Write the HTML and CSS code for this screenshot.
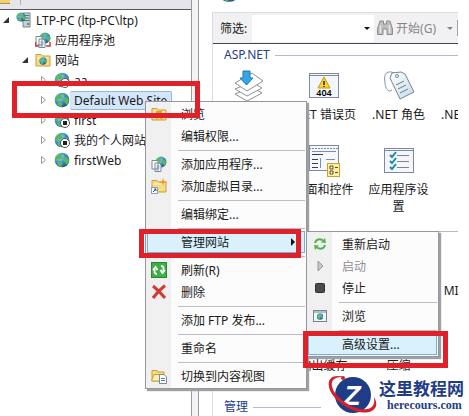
FILE: index.html
```
<!DOCTYPE html>
<html lang="zh-CN">
<head>
    <meta charset="UTF-8">
    <meta name="viewport" content="width=device-width, initial-scale=1.0">
    <title>IIS 管理器</title>
    <link rel="stylesheet" href="styles.css">
</head>
<body>
    <!-- Shared icons -->
    <svg class="defs" width="0" height="0">
        <defs>
            <radialGradient id="sea" cx="0.35" cy="0.3" r="0.8">
                <stop offset="0" stop-color="#b5e6f8"/>
                <stop offset="0.5" stop-color="#3d8fc4"/>
                <stop offset="1" stop-color="#17497d"/>
            </radialGradient>
            <linearGradient id="paper" x1="0" y1="0" x2="1" y2="1">
                <stop offset="0" stop-color="#ffffff"/>
                <stop offset="1" stop-color="#c9d9e4"/>
            </linearGradient>
            <symbol id="globe" viewBox="0 0 16 16">
                <circle cx="8" cy="8" r="7.3" fill="url(#sea)"/>
                <path d="M2 4.500 Q5 1 9 1.500 L7.500 4 L9 6 L6 7.500 L4 7 L1.500 9 Q0.800 6.500 2 4.500Z M10 6.500 L13 5 L15 8 Q15 11 12.500 13 L11 10.500 L9.500 9Z M4.500 9.500 L8 10.500 L8.500 13 L7 15 Q4 14 3 12Z" fill="#58b85a"/>
            </symbol>
            <symbol id="globe-stopped" viewBox="0 0 16 16">
                <use href="#globe" width="16" height="16"/>
                <circle cx="11" cy="11" r="4.500" fill="#fff" stroke="#555"/>
                <rect x="9" y="9" width="4" height="4" fill="#222"/>
            </symbol>
            <symbol id="folder" viewBox="0 0 16 16">
                <path d="M1 14 V2.500 H6 L7.500 4 H15 V14Z" fill="#f5dc87" stroke="#c99f35"/>
                <path d="M2 6 H14" stroke="#fff4c4"/>
            </symbol>
            <symbol id="pages" viewBox="0 0 16 16">
                <use href="#globe" x="4" y="0" width="12" height="12"/>
                <path d="M1 4.500 H7 V13 H1Z M4 7 H8 L10 9 V15.500 H4Z" fill="#fff" stroke="#7b8b96"/>
                <path d="M5.500 10 H8.500 M5.500 12 H8.500 M5.500 14 H8" stroke="#6d8fb0"/>
            </symbol>
        </defs>
    </svg>

    <div class="window">
        <nav class="tree-pane">
            <div class="tree-bar"><span class="bar-folder"></span><span class="bar-divider"></span></div>
            <ul class="tree">
                <li class="node level-0">
                    <svg class="arrow" viewBox="0 0 8 8"><path d="M7 1 V7 H1Z" fill="#333"/></svg>
                    <svg class="icon" viewBox="0 0 16 16"><path d="M7 1 H14 V15 H7Z" fill="#c5d0d8" stroke="#74848f"/><path d="M8 3.500 H13 M8 6 H13 M8 8.500 H13" stroke="#60717c"/><path d="M11 12 H13" stroke="#48a848" stroke-width="2"/><use href="#globe" width="10" height="10"/></svg>
                    <a href="#server">LTP-PC (ltp-PC\ltp)</a>
                </li>
                <li class="node level-1">
                    <span class="arrow"></span>
                    <svg class="icon" viewBox="0 0 16 16"><use href="#pages" width="16" height="16"/><path d="M0.500 10 V14 H4 M15 10 V14 H11" fill="none" stroke="#c5403c" stroke-width="1.500"/></svg>
                    <a href="#pools">应用程序池</a>
                </li>
                <li class="node level-1">
                    <svg class="arrow" viewBox="0 0 8 8"><path d="M7 1 V7 H1Z" fill="#333"/></svg>
                    <svg class="icon" viewBox="0 0 16 16"><use href="#folder" width="16" height="16"/><use href="#globe" x="4" y="5" width="8" height="8"/></svg>
                    <a href="#sites">网站</a>
                </li>
                <li class="node level-2">
                    <svg class="arrow" viewBox="0 0 8 8"><path d="M1.500 0.500 L5.500 4 L1.500 7.500Z" fill="#fff" stroke="#999"/></svg>
                    <svg class="icon"><use href="#globe-stopped"/></svg>
                    <a href="#aa">aa</a>
                </li>
                <li class="node level-2 selected">
                    <svg class="arrow" viewBox="0 0 8 8"><path d="M1.500 0.500 L5.500 4 L1.500 7.500Z" fill="#fff" stroke="#999"/></svg>
                    <svg class="icon"><use href="#globe"/></svg>
                    <a href="#default">Default Web Site</a>
                </li>
                <li class="node level-2">
                    <svg class="arrow" viewBox="0 0 8 8"><path d="M1.500 0.500 L5.500 4 L1.500 7.500Z" fill="#fff" stroke="#999"/></svg>
                    <svg class="icon"><use href="#globe-stopped"/></svg>
                    <a href="#first">first</a>
                </li>
                <li class="node level-2">
                    <svg class="arrow" viewBox="0 0 8 8"><path d="M1.500 0.500 L5.500 4 L1.500 7.500Z" fill="#fff" stroke="#999"/></svg>
                    <svg class="icon"><use href="#globe-stopped"/></svg>
                    <a href="#personal">我的个人网站</a>
                </li>
                <li class="node level-2">
                    <svg class="arrow" viewBox="0 0 8 8"><path d="M1.500 0.500 L5.500 4 L1.500 7.500Z" fill="#fff" stroke="#999"/></svg>
                    <svg class="icon"><use href="#globe"/></svg>
                    <a href="#firstweb">firstWeb</a>
                </li>
            </ul>
        </nav>

        <div class="splitter"></div>

        <main class="features">
            <header class="title-row">
                <svg class="title-icon" viewBox="0 0 26 26"><use href="#globe" width="26" height="26"/></svg>
            </header>
            <div class="panel">
                <form class="filter-bar">
                    <label for="filter">筛选:</label>
                    <span class="filter-box"><select id="filter"><option></option></select></span>
                    <button type="button" class="go">
                        <svg viewBox="0 0 16 16"><path d="M3 1 H6.500 V4 H9.500 V1 H13 L15.500 9 V14.500 H10 V9 H6 V14.500 H0.500 V9Z" fill="#bdbdbd" stroke="#8c8c8c"/><path d="M3.500 5 V13 M12.500 5 V13" stroke="#e6e6e6" stroke-width="1.500"/></svg>
                        开始(G)
                        <span class="caret"></span>
                    </button>
                    <span class="bar-end"></span>
                </form>

                <section class="group">
                    <h2>ASP.NET</h2>
                    <div class="tiles">
                        <a class="tile" href="#compile">
                            <svg viewBox="0 0 32 32"><g fill="#fff" stroke="#8c9296"><path d="M2 24 L19 17 L29 23 L14 31Z"/><path d="M2 19 L19 12 L29 18 L14 26Z"/><path d="M2 13 L19 3 L30 11 L14 21Z"/></g><path d="M10 1 H17 V8 H20 L13.500 15 L7 8 H10Z" fill="#35a5e3" stroke="#1b76b5"/></svg>
                        </a>
                        <a class="tile" href="#errors">
                            <svg viewBox="0 0 32 32"><rect x="1.500" y="3.500" width="29" height="24" fill="#f3f6fa" stroke="#8088a0"/><path d="M1 5.500 H31" stroke="#8088a0"/><path d="M16 7 L22 18 H10Z" fill="#fbd52b" stroke="#c49a10"/><path d="M16 11 V15 M16 16 V17" stroke="#222" stroke-width="1.500"/><text x="16" y="26" class="code">404</text></svg>
                            <span>.NET 错误页</span>
                        </a>
                        <a class="tile" href="#roles">
                            <svg viewBox="0 0 32 32"><path d="M11 3 C5 0 0 3 2 12 C2 19 6 23 9 20" fill="none" stroke="#84939d"/><path d="M7 8 L9 3 L18 2 L22 4 L31 22 L17 29Z" fill="url(#paper)" stroke="#6f8796"/><circle cx="14" cy="6" r="1.500" fill="#fff" stroke="#6f8796"/><path d="M13 15 L21 11 M15 19 L23 15 M17 23 L25 19" stroke="#5c8099"/></svg>
                            <span>.NET 角色</span>
                        </a>
                        <a class="tile" href="#trust">
                            <svg viewBox="0 0 32 32"></svg>
                            <span>.NET 信任级别</span>
                        </a>
                        <a class="tile" href="#users"></a>
                        <a class="tile" href="#controls">
                            <svg viewBox="0 0 32 32"><rect x="1.500" y="0.500" width="29" height="25" fill="#f6f8fc" stroke="#8088a0"/><path d="M1 3.500 H31" stroke="#8088a0" stroke-dasharray="2 1"/><path d="M4 9.500 H15 M4 14.500 H10 M4 18.500 H10 M4 22.500 H10" stroke="#333d60"/><path d="M4 6.500 H28 M12.500 13 V23 M18 14.500 H27" stroke="#6d8fd0"/><rect x="19.500" y="18.500" width="12" height="13" fill="#fdf0a5" stroke="#c9a227"/><path d="M22 21 H25 V24 H22Z M22 26 H25 V29 H22Z M27 22.500 H30 M27 27.500 H30" fill="#fff" stroke="#5b4d18"/></svg>
                            <span>页面和控件</span>
                        </a>
                        <a class="tile" href="#appsettings">
                            <svg viewBox="0 0 32 32"><rect x="1.500" y="3.500" width="29" height="24" fill="#f3f6fa" stroke="#8088a0"/><path d="M1 5.500 H31" stroke="#8088a0"/><path d="M14 10.500 H26 M14 16.500 H26 M14 22.500 H26" stroke="#7b8490"/><path d="M7 10 L9 12 L13 7 M7 16 L9 18 L13 13 M7 22 L9 24 L13 19" fill="none" stroke="#1e86a8" stroke-width="2"/></svg>
                            <span>应用程序设置</span>
                        </a>
                    </div>
                </section>

                <section class="group">
                    <h2>IIS</h2>
                    <div class="tiles">
                        <a class="tile" href="#asp"></a>
                        <a class="tile" href="#cgi"></a>
                        <a class="tile" href="#http"></a>
                        <a class="tile" href="#mime"><svg viewBox="0 0 32 32"></svg><span>MIME 类型</span></a>
                        <a class="tile" href="#modules"></a>
                        <a class="tile" href="#cache"><svg viewBox="0 0 32 32"></svg><span>输出缓存</span></a>
                        <a class="tile" href="#zip"><svg viewBox="0 0 32 32"></svg><span>压缩</span></a>
                    </div>
                </section>

                <section class="group">
                    <h2>管理</h2>
                </section>
            </div>
        </main>
    </div>

    <!-- Site context menu -->
    <div class="menu site-menu">
        <button><svg viewBox="0 0 16 16"><use href="#folder" width="16" height="16"/><path d="M5 5 H11 V14 L8 11 L5 14Z" fill="#dba52c"/></svg>浏览</button>
        <button><i></i>编辑权限...</button>
        <hr>
        <button><svg viewBox="0 0 16 16"><use href="#pages" width="16" height="16"/></svg>添加应用程序...</button>
        <button><svg viewBox="0 0 16 16"><use href="#folder" width="16" height="16"/><path d="M12 0 L13 3 L16 4 L13 5 L12 8 L11 5 L8 4 L11 3Z" fill="#f0a021"/><rect x="0.500" y="9.500" width="6" height="6" fill="#fff" stroke="#8ba0c0"/><path d="M2 14 L5 11 M3 11 H5 V13" fill="none" stroke="#2450a8"/></svg>添加虚拟目录...</button>
        <hr>
        <button><i></i>编辑绑定...</button>
        <hr>
        <button class="active"><i></i>管理网站<span class="more"></span></button>
        <hr>
        <button><svg viewBox="0 0 16 16"><rect x="0.500" y="0.500" width="15" height="15" fill="#3fae48" stroke="#2a8535"/><path d="M6 12 C3 12 3 9 4 7 M2 8 L4.500 5 L6.500 8 M10 4 C13 4 13 7 12 9 M14 8 L11.500 11 L9.500 8" fill="none" stroke="#fff" stroke-width="1.800"/></svg>刷新(R)</button>
        <button><svg viewBox="0 0 16 16"><path d="M2 2 Q7 6 14 14 M14 1.500 Q8 6 2 14" fill="none" stroke="#d13a36" stroke-width="3"/></svg>删除</button>
        <hr>
        <button><i></i>添加 FTP 发布...</button>
        <hr>
        <button><i></i>重命名</button>
        <hr>
        <button><svg viewBox="0 0 16 16"><path d="M1 13 V2.500 H6 L7 4 H13 V13Z" fill="#f5dc87" stroke="#c99f35"/><path d="M0.500 13 L3 6.500 H9 V13Z" fill="#fdf0b8" stroke="#c99f35"/><path d="M8.500 6.500 H13 L15.500 9 V15.500 H8.500Z" fill="#fff" stroke="#7b8b96"/><path d="M10 10.500 H14 M10 12.500 H14" stroke="#4a7ab0"/></svg>切换到内容视图</button>
    </div>

    <!-- Manage site submenu -->
    <div class="menu sub-menu">
        <button><svg viewBox="0 0 16 16"><path d="M3 7 C4 3 8 2.500 11 4.500 M13 9 C12 13 8 13.500 5 11.500" fill="none" stroke="#53b44d" stroke-width="2"/><path d="M9 6.500 L14 7 L13 2Z M7 9.500 L2 9 L3 14Z" fill="#53b44d"/></svg>重新启动</button>
        <button disabled><svg viewBox="0 0 16 16"><path d="M6 3 L11 8 L6 13Z" fill="#c8c8c8" stroke="#999"/></svg>启动</button>
        <button><svg viewBox="0 0 16 16"><rect x="3.500" y="3.500" width="9" height="9" rx="1" fill="#4a4a4a" stroke="#2c2c2c"/></svg>停止</button>
        <hr>
        <button><svg viewBox="0 0 16 16"><rect x="1.500" y="2.500" width="13" height="11" fill="#f2f6f8" stroke="#74848f"/><path d="M2 4 H14" stroke="#74848f"/><use href="#globe" x="4.500" y="5" width="7" height="7"/></svg>浏览</button>
        <hr>
        <button class="active"><i></i>高级设置...</button>
    </div>

    <!-- Callout frames -->
    <div class="frame frame-site"></div>
    <div class="frame frame-manage"></div>
    <div class="frame frame-advanced"></div>

    <div class="brand">
        <svg viewBox="0 0 58 42">
            <circle cx="32" cy="21" r="18" fill="#1f3c86"/>
            <text x="31" y="31" class="mark">Z</text>
            <path d="M23 3 C8 -1 4 9 11 20 C18 31 36 41 48 38 C56 36 57 29 53 23 C54 30 52 34 46 35 C36 37 21 28 14 19 C8 10 10 2 23 3Z" fill="#d3202a"/>
            <circle cx="22" cy="4" r="2" fill="#d3202a"/>
        </svg>
        <div class="brand-text">
            <strong>这里教程网</strong>
            <span>herecours.com</span>
        </div>
    </div>
</body>
</html>
```
FILE: styles.css
```
* {
    box-sizing: border-box;
}
body {
    margin: 0;
    background: #fff;
    color: #1a1a1a;
    font-family: "Noto Sans", "Noto Sans CJK SC", sans-serif;
    font-size: 12px;
    line-height: 17px;
    overflow: hidden;
}
a {
    color: inherit;
    text-decoration: none;
}
button {
    font: inherit;
    color: inherit;
    border: 0;
    background: none;
    padding: 0;
}
.defs {
    position: absolute;
}
.window {
    display: flex;
    height: 100vh;
    margin-right: 11px;
    overflow: hidden;
}

/* Connections tree */
.tree-pane {
    flex: none;
    width: 192px;
    border-right: 1px solid #9a9a9e;
}
.tree-bar {
    display: flex;
    gap: 10px;
    height: 10px;
    background: #e6e5ea;
    border-bottom: 1px solid #55555f;
}
.bar-folder {
    width: 10px;
    height: 4px;
    background: #f0cf78;
    border-bottom: 1px solid #b98f35;
}
.bar-divider {
    width: 1px;
    height: 5px;
    background: #b0b0b8;
}
.tree {
    list-style: none;
    margin: 0;
    padding: 0;
}
.node {
    display: flex;
    align-items: center;
    height: 20px;
    padding-left: 2px;
    white-space: nowrap;
}
.level-1 {
    padding-left: 21px;
}
.level-2 {
    padding-left: 40px;
}
.arrow {
    flex: none;
    width: 8px;
    height: 8px;
    margin-right: 6px;
}
.icon {
    flex: none;
    width: 16px;
    height: 16px;
}
.node a {
    padding: 0 4px;
}
.selected a {
    background: #d3e6fa;
    border: 1px solid #8fb8e0;
    border-left: 0;
    border-radius: 2px;
}
.splitter {
    flex: none;
    width: 7px;
    background: #f3f2f5;
    border-right: 1px solid #9a9a9e;
}

/* Feature view */
.features {
    flex: 1;
    min-width: 0;
    padding-left: 13px;
}
.title-row {
    height: 12px;
    overflow: hidden;
}
.title-icon {
    display: block;
    width: 26px;
    height: 26px;
    margin: -23px 0 0 4px;
}
.panel {
    border-left: 1px solid #dcdce2;
    overflow: hidden;
}
.filter-bar {
    display: flex;
    align-items: center;
    height: 32px;
    background: #f1f0f2;
    border-top: 1px solid #dcdce2;
    border-bottom: 1px solid #44444c;
}
.filter-bar label {
    width: 39px;
    padding-left: 7px;
}
.filter-box {
    position: relative;
    flex: 1;
    height: 27px;
}
.filter-box select {
    appearance: none;
    width: 100%;
    height: 100%;
    border: 0;
    background: #fff;
}
.filter-box::after {
    content: "";
    position: absolute;
    top: 12px;
    right: 4px;
    border: 3px solid transparent;
    border-top-color: #111;
}
.go {
    display: flex;
    align-items: center;
    gap: 3px;
    padding-left: 3px;
    color: #85858a;
}
.go svg {
    width: 16px;
    height: 16px;
}
.caret {
    margin: 3px 4px 0 8px;
    border: 3px solid transparent;
    border-top-color: #85858a;
}
.bar-end {
    width: 1px;
    height: 16px;
    background: #a0a0a8;
}
.group {
    height: 176px;
}
.group h2 {
    display: flex;
    align-items: center;
    gap: 5px;
    margin: 0;
    padding: 0 0 4px 11px;
    font-size: 12px;
    font-weight: normal;
    line-height: 22px;
    color: #1e3c8c;
}
.group h2::after {
    content: "";
    flex: 1;
    height: 1px;
    background: #b0bccb;
}
.tiles {
    display: grid;
    grid-template-columns: repeat(4, 75px);
    grid-auto-rows: 75px;
    margin-left: -2px;
}
.tile {
    display: flex;
    flex-direction: column;
    align-items: center;
    gap: 4px;
    padding: 0 2px;
    text-align: center;
}
.tile svg {
    flex: none;
    width: 32px;
    height: 32px;
}
.code {
    font-size: 9px;
    font-weight: 600;
    text-anchor: middle;
}

/* Context menus */
.menu {
    position: absolute;
    padding: 1px;
    background: linear-gradient(90deg, #f0f0f0 25px, #fcfcfc 25px);
    border: 1px solid #97979b;
    box-shadow: 2px 2px 1px #a0a0a4;
}
.site-menu {
    left: 145px;
    top: 101px;
    width: 162px;
}
.sub-menu {
    left: 306px;
    top: 231px;
    width: 133px;
}
.menu button {
    display: flex;
    align-items: center;
    width: 100%;
    height: 22px;
    padding-left: 3px;
    border: 1px solid transparent;
    white-space: nowrap;
}
.menu svg,
.menu i {
    width: 16px;
    height: 16px;
    margin-right: 14px;
}
.menu button:disabled {
    color: #909094;
}
.menu .active {
    background: #d9f0fd;
    border-color: #79aed6;
}
.menu hr {
    height: 1px;
    margin: 3px 0 2px 31px;
    border: 0;
    background: #bcbcc0;
}
.more {
    margin: 0 9px 0 auto;
    border: 4px solid transparent;
    border-left-color: #111;
    border-right-width: 0;
}

/* Callouts */
.frame {
    position: absolute;
    border: 5px solid #e0212a;
}
.frame-site {
    left: 12px;
    top: 81px;
    width: 188px;
    height: 37px;
}
.frame-manage {
    left: 139px;
    top: 229px;
    width: 162px;
    height: 29px;
}
.frame-advanced {
    left: 303px;
    top: 331px;
    width: 145px;
    height: 37px;
}

.brand {
    position: absolute;
    left: 321px;
    top: 374px;
    display: flex;
    background: #fff;
    color: #1f3c86;
}
.brand svg {
    width: 58px;
    height: 42px;
}
.mark {
    fill: #fff;
    font: italic bold 28px "Liberation Sans", sans-serif;
    text-anchor: middle;
}
.brand-text {
    display: flex;
    flex-direction: column;
    padding-top: 4px;
}
.brand-text strong {
    font: bold 17px/20px "Noto Sans CJK SC", sans-serif;
}
.brand-text span {
    padding-left: 8px;
    font: bold 12px/14px "Liberation Serif", serif;
}
```
